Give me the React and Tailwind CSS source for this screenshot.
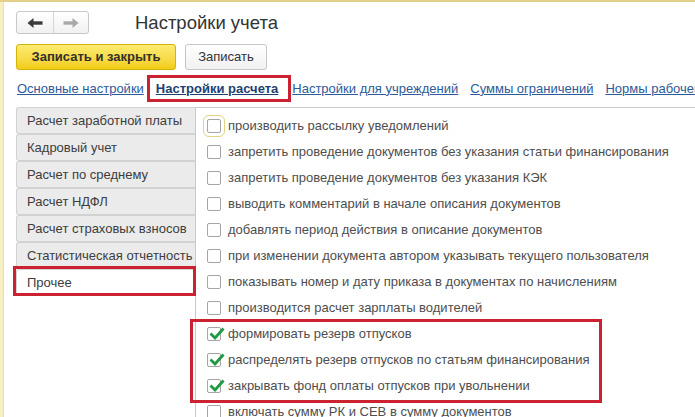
import React from 'react'

const tabs = [
  'Основные настройки',
  'Настройки расчета',
  'Настройки для учреждений',
  'Суммы ограничений',
  'Нормы рабочего времени',
]

const sections = [
  'Расчет заработной платы',
  'Кадровый учет',
  'Расчет по среднему',
  'Расчет НДФЛ',
  'Расчет страховых взносов',
  'Статистическая отчетность',
]

const options = [
  'производить рассылку уведомлений',
  'запретить проведение документов без указания статьи финансирования',
  'запретить проведение документов без указания КЭК',
  'выводить комментарий в начале описания документов',
  'добавлять период действия в описание документов',
  'при изменении документа автором указывать текущего пользователя',
  'показывать номер и дату приказа в документах по начислениям',
  'производится расчет зарплаты водителей',
]

const checkedOptions = [
  'формировать резерв отпусков',
  'распределять резерв отпусков по статьям финансирования',
  'закрывать фонд оплаты отпусков при увольнении',
]

// arrows for the back / forward buttons
const Arrow = ({ dir = 'left', color }) => (
  <svg width="16" height="12" viewBox="0 0 16 12" style={{ transform: dir === 'right' ? 'scaleX(-1)' : undefined }}>
    <path d="M0.5 6 L6.5 1 L6.5 11 Z" fill={color} />
    <rect x="5.5" y="4.3" width="10" height="3.4" fill={color} />
  </svg>
)

const Checkbox = ({ checked, focused }) => (
  <span
    className={
      'relative inline-block w-[14px] h-[14px] shrink-0 bg-white border border-[#a5a5a5] rounded-[2px]' +
      (focused ? ' outline-1 outline-[#e4d283] outline-offset-3' : '')
    }
  >
    {checked && (
      <svg className="absolute left-[1px] -top-[1px]" width="16" height="13" viewBox="0 0 16 13">
        <path d="M1.5 6.5 L6 11 L14.5 1.5" fill="none" stroke="#1f9a42" strokeWidth="2.8" />
      </svg>
    )}
  </span>
)

const OptionRow = ({ label, checked, focused }) => (
  <div className="h-[26px] flex items-center pl-[11px]">
    <Checkbox checked={checked} focused={focused} />
    <span className="ml-[7px] whitespace-nowrap text-[13px] text-[#4e4e4e]">{label}</span>
  </div>
)

export default function App() {
  return (
    <div
      className="w-[695px] h-[417px] overflow-hidden bg-white flex border-t-2 border-[#e3d08a]"
      style={{ fontFamily: '"Liberation Sans", Arial, sans-serif' }}
    >
      <div className="w-[4px] shrink-0 bg-[#f8efc3] border-r border-[#eee0a4]" />
      <div className="flex-1 flex flex-col pl-[12px] min-w-0">
        {/* header */}
        <div className="mt-[9px] h-[23px] flex items-center">
          <div className="w-[73px] h-[23px] flex border border-[#c8c8c8] rounded-[3px] bg-gradient-to-b from-white to-[#f1f1f1]">
            <div className="w-[37px] flex items-center justify-center border-r border-[#d6d6d6]">
              <Arrow color="#3a3a3a" />
            </div>
            <div className="flex-1 flex items-center justify-center">
              <Arrow dir="right" color="#a9a9a9" />
            </div>
          </div>
          <h1 className="ml-[46px] text-[18.5px] text-[#333333] whitespace-nowrap">Настройки учета</h1>
        </div>

        {/* buttons */}
        <div className="mt-[10px] flex">
          <button className="w-[160px] h-[26px] rounded-[3px] border border-[#d4b40a] bg-gradient-to-b from-[#fdec70] to-[#f2cd0c] text-[13px] font-bold text-[#34302a]">
            Записать и закрыть
          </button>
          <button className="ml-[9px] w-[82px] h-[26px] rounded-[3px] border border-[#c6c6c6] bg-gradient-to-b from-white to-[#f1f1f1] text-[13px] text-[#333333]">
            Записать
          </button>
        </div>

        {/* tab links */}
        <div className="mt-[5px] h-[27px] flex items-center whitespace-nowrap text-[13px]">
          <a className="ml-[1px] text-[#2d5a9a] underline">{tabs[0]}</a>
          <span className="ml-[3px] h-[27px] flex items-center border-[3px] border-[#cc2130] pl-[6px] pr-[10px]">
            <a className="font-bold text-[#1d3f72] underline">{tabs[1]}</a>
          </span>
          <a className="ml-[1px] text-[#2d5a9a] underline">{tabs[2]}</a>
          <a className="ml-[12px] text-[#2d5a9a] underline">{tabs[3]}</a>
          <a className="ml-[12px] text-[#2d5a9a] underline">{tabs[4]}</a>
        </div>

        {/* body */}
        <div className="mt-[5px] flex flex-1">
          <div className="w-[179px] shrink-0 flex flex-col">
            {sections.map((s) => (
              <div
                key={s}
                className="h-[27px] flex items-center pl-[10px] bg-[#ebebeb] border border-r-0 border-[#d2d2d2] rounded-l-[3px] text-[13px] text-[#3d3d3d] whitespace-nowrap"
              >
                {s}
              </div>
            ))}
            <div className="relative h-[27px] flex items-center pl-[10px] bg-white border border-r-0 border-[#d2d2d2] rounded-l-[3px] text-[13px] text-[#3d3d3d]">
              Прочее
              <span className="absolute -left-[4px] -top-[4px] -right-[1px] -bottom-[1px] border-[3px] border-[#cc2130]" />
            </div>
          </div>

          <div className="flex-1 border-l border-t border-[#c9c9c9] pt-[5px]">
            {options.map((o, i) => (
              <OptionRow key={o} label={o} focused={i === 0} />
            ))}
            <div className="relative">
              {checkedOptions.map((o) => (
                <OptionRow key={o} label={o} checked />
              ))}
              <span className="absolute -left-[6px] -top-[2px] w-[412px] -bottom-[4px] border-[3px] border-[#cc2130]" />
            </div>
            <OptionRow label="включать сумму РК и СЕВ в сумму документов" />
          </div>
        </div>
      </div>
    </div>
  )
}
